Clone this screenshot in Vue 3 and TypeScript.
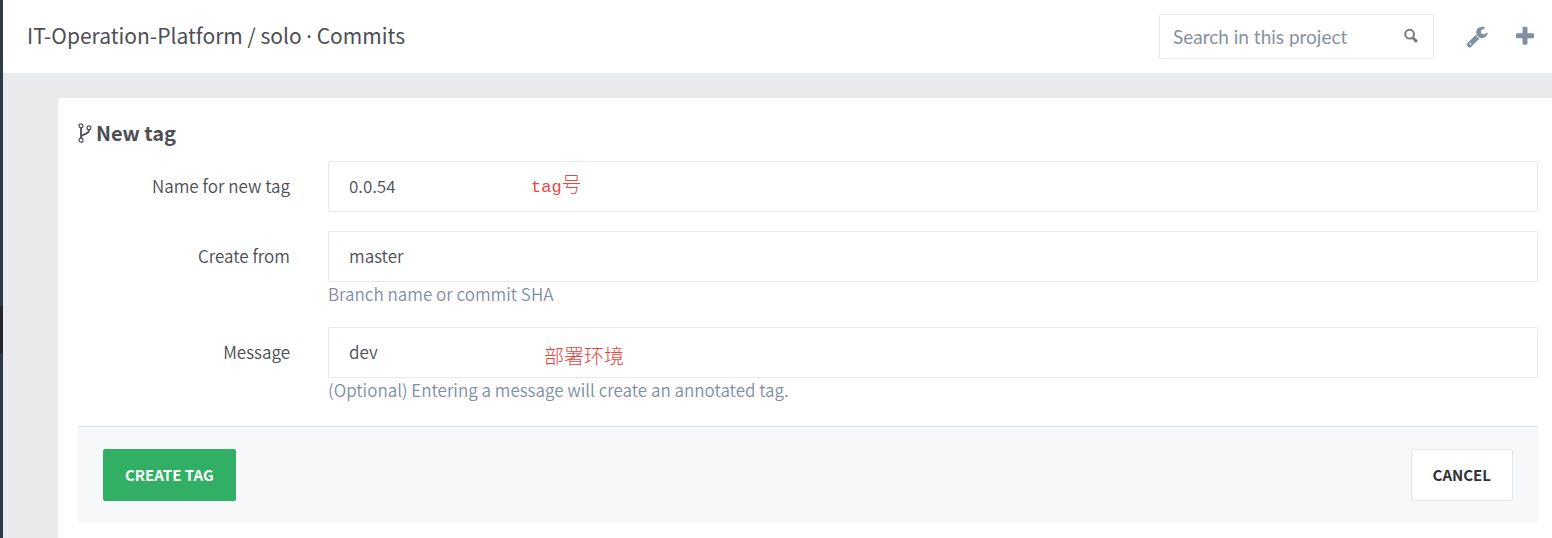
<script setup lang="ts">
import { ref } from 'vue'

interface Field {
  id: string
  label: string
  value: string
  help?: string
  note?: string
}

const query = ref('')
const fields = ref<Field[]>([
  { id: 'tag-name', label: 'Name for new tag', value: '0.0.54' },
  { id: 'tag-ref', label: 'Create from', value: 'master', help: 'Branch name or commit SHA' },
  {
    id: 'tag-message',
    label: 'Message',
    value: 'dev',
    help: '(Optional) Entering a message will create an annotated tag.',
    note: '部署环境',
  },
])
</script>

<template>
  <div class="shell">
    <aside class="rail"><span class="rail-active"></span></aside>
    <div class="page">
      <header class="topbar">
        <h1 class="crumbs">IT-Operation-Platform / solo <span class="dot">·</span> Commits</h1>
        <form class="search" role="search" @submit.prevent>
          <input v-model="query" type="search" aria-label="Search in this project" placeholder="Search in this project" />
          <svg class="search-icon" viewBox="0 0 16 16" aria-hidden="true">
            <circle cx="6.6" cy="6.2" r="4.4" />
            <path d="M10 10l4 3.8" />
          </svg>
        </form>
        <button class="tool" type="button" aria-label="Admin area">
          <svg viewBox="0 0 1792 1792" aria-hidden="true">
            <path d="M448 1472q0-26-19-45t-45-19-45 19-19 45 19 45 45 19 45-19 19-45zm644-420l-682 682q-37 37-90 37-52 0-91-37l-106-108q-38-36-38-90 0-53 38-91l681-681q39 98 114.5 173.5t173.5 114.5zm634-435q0 39-23 106-47 134-164.5 217.5t-258.5 83.5q-185 0-316.5-131.5t-131.5-316.5 131.5-316.5 316.5-131.5q58 0 121.5 16.5t107.5 46.5q16 11 16 28t-16 28l-293 169v224l193 107q5-3 79-48.5t135.5-81 70.5-35.5q15 0 23.5 10t8.5 25z" />
          </svg>
        </button>
        <button class="tool" type="button" aria-label="New project">
          <svg viewBox="0 0 1792 1792" aria-hidden="true">
            <path d="M1600 736v192q0 40-28 68t-68 28h-416v416q0 40-28 68t-68 28h-192q-40 0-68-28t-28-68v-416h-416q-40 0-68-28t-28-68v-192q0-40 28-68t68-28h416v-416q0-40 28-68t68-28h192q40 0 68 28t28 68v416h416q40 0 68 28t28 68z" />
          </svg>
        </button>
      </header>
      <main class="panel">
        <h2 class="title">
          <svg class="fork" viewBox="0 0 14 20" aria-hidden="true">
            <circle cx="3" cy="2.8" r="2" />
            <circle cx="3" cy="17.2" r="2" />
            <circle cx="11" cy="4.8" r="2" />
            <path class="stem" d="M3 4.8v10.4M11 6.8c0 4.4-4 3.8-6.2 5.2-1.2.7-1.6 1.5-1.8 2.8" />
          </svg>
          New tag
        </h2>
        <form @submit.prevent>
          <div v-for="(field, i) in fields" :key="field.id" class="row">
            <label :for="field.id">{{ field.label }}</label>
            <div class="control">
              <input :id="field.id" v-model="field.value" type="text" />
              <span v-if="i === 0" class="note note-tag"><span class="mono">tag</span>号</span>
              <span v-if="field.note" class="note note-env">{{ field.note }}</span>
              <p v-if="field.help" class="help">{{ field.help }}</p>
            </div>
          </div>
          <div class="actions">
            <button class="btn create" type="submit">CREATE TAG</button>
            <button class="btn cancel" type="button">CANCEL</button>
          </div>
        </form>
      </main>
    </div>
  </div>
</template>

<style>
body {
  margin: 0;
}
</style>

<style scoped>
* {
  box-sizing: border-box;
}
.shell {
  display: flex;
  min-height: 100vh;
  background: #e9eaec;
  color: #4c4e54;
  font-family: "Noto Sans CJK SC", "Noto Sans", sans-serif;
  font-size: 17px;
  font-weight: 350;
  line-height: 24px;
}
.rail {
  position: relative;
  width: 3px;
  flex: none;
  background: #2f3a47;
}
.rail-active {
  position: absolute;
  top: 306px;
  left: 0;
  width: 3px;
  height: 48px;
  background: #24262b;
}
.page {
  flex: 1;
  min-width: 0;
  display: flex;
  flex-direction: column;
}
.topbar {
  display: flex;
  align-items: center;
  height: 73px;
  padding: 0 15px 0 24px;
  background: #fff;
}
.crumbs {
  flex: 1;
  margin: 0;
  padding-bottom: 3px;
  font-size: 21px;
  font-weight: 400;
  line-height: 32px;
}
.dot {
  font-family: "Noto Sans", sans-serif;
}
.search {
  position: relative;
  width: 275px;
  margin-right: 31px;
}
.search input {
  display: block;
  width: 100%;
  height: 45px;
  padding: 0 40px 0 13px;
  border: 1px solid #e7e9ed;
  border-radius: 2px;
  outline: none;
  background: #fff;
  color: #4c4e54;
  font-family: Lato, sans-serif;
  font-size: 19px;
  appearance: none;
}
.search input::placeholder {
  color: #8791a0;
  opacity: 1;
}
.search-icon {
  position: absolute;
  top: 14px;
  right: 15px;
  width: 16px;
  height: 16px;
  fill: none;
  stroke: #77797c;
  stroke-width: 2;
}
.search-icon path {
  stroke-width: 3;
}
.tool {
  width: 24px;
  height: 24px;
  padding: 0;
  border: 0;
  background: none;
}
.tool + .tool {
  margin-left: 24px;
}
.tool svg {
  display: block;
  width: 24px;
  height: 24px;
  padding-bottom: 1px;
  fill: #7f8fa4;
}
.panel {
  flex: 1;
  margin: 25px 0 0 55px;
  padding: 20px 14px 15px 20px;
  border-top-left-radius: 2px;
  background: #fff;
}
.title {
  display: flex;
  align-items: center;
  gap: 4px;
  margin: 0 0 13px;
  font-size: 20px;
  font-weight: 700;
  line-height: 30px;
}
.fork {
  width: 14px;
  height: 20px;
  fill: none;
  stroke: #4c4e54;
  stroke-width: 1.2;
}
.stem {
  stroke-width: 1.8;
}
.row {
  display: flex;
  gap: 38px;
  margin-bottom: 19px;
}
.row label {
  width: 212px;
  padding-top: 13px;
  text-align: right;
}
.control {
  position: relative;
  flex: 1;
}
.control input {
  display: block;
  width: 100%;
  height: 51px;
  padding: 0 20px 2px;
  border: 1px solid #e7e9ed;
  border-radius: 2px;
  outline: none;
  background: #fff;
  color: #4c4e54;
  font: inherit;
}
.help {
  margin: 0;
  padding-bottom: 2px;
  color: #7f8fa4;
}
.note {
  position: absolute;
  color: #e8453f;
  font-size: 20px;
  font-weight: 300;
  line-height: 24px;
  pointer-events: none;
}
.note-tag {
  top: 11px;
  left: 203px;
}
.note-env {
  top: 17px;
  left: 216px;
}
.mono {
  font-family: "Liberation Mono", monospace;
  font-size: 17px;
  font-weight: 400;
}
.actions {
  display: flex;
  justify-content: space-between;
  margin-top: 22px;
  padding: 22px 25px;
  border-top: 1px solid #dcdfe8;
  background: #f6f8fa;
}
.btn {
  height: 52px;
  padding: 0 21px;
  border: 1px solid #e3e6ea;
  border-radius: 2px;
  font: inherit;
  font-size: 15px;
  font-weight: 700;
}
.create {
  border-color: #31af64;
  background: #31af64;
  color: #fff;
}
.cancel {
  background: #fff;
  color: #303236;
}
</style>
